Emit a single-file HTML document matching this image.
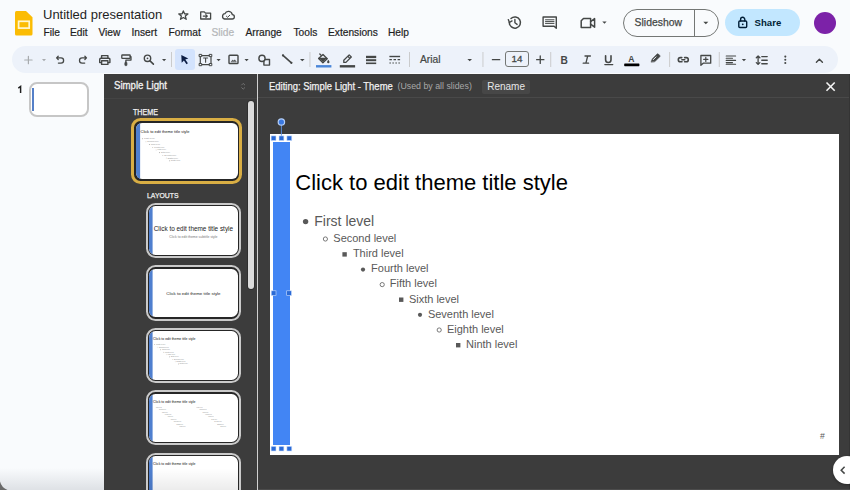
<!DOCTYPE html>
<html><head><meta charset="utf-8">
<style>
*{margin:0;padding:0;box-sizing:border-box}
html,body{width:850px;height:490px;overflow:hidden;background:#f9fbfd;font-family:"Liberation Sans",sans-serif;position:relative}
.a{position:absolute}
.t{white-space:nowrap;line-height:1}
svg{position:absolute;overflow:visible}
</style></head><body>

<!-- ===== HEADER ===== -->
<svg style="left:15px;top:11px" width="18" height="25" viewBox="0 0 18 25">
  <path d="M1.5 0 H11 L17.5 6.3 V23 Q17.5 24.5 16 24.5 H1.5 Q0 24.5 0 23 V1.5 Q0 0 1.5 0Z" fill="#fbbc04"/>
  <rect x="3.6" y="10.3" width="10.6" height="6.8" fill="none" stroke="#fff6d0" stroke-width="1.7"/>
</svg>
<div class="a t" style="left:43px;top:8.4px;font-size:13px;color:#1f1f1f">Untitled presentation</div>

<div class="a t" style="left:43.5px;top:28px;font-size:10.2px;color:#1f1f1f;-webkit-text-stroke:0.2px #1f1f1f">File</div>
<div class="a t" style="left:70px;top:28px;font-size:10.2px;color:#1f1f1f;-webkit-text-stroke:0.2px #1f1f1f">Edit</div>
<div class="a t" style="left:98.5px;top:28px;font-size:10.2px;color:#1f1f1f;-webkit-text-stroke:0.2px #1f1f1f">View</div>
<div class="a t" style="left:131.5px;top:28px;font-size:10.2px;color:#1f1f1f;-webkit-text-stroke:0.2px #1f1f1f">Insert</div>
<div class="a t" style="left:168.5px;top:28px;font-size:10.2px;color:#1f1f1f;-webkit-text-stroke:0.2px #1f1f1f">Format</div>
<div class="a t" style="left:211.5px;top:28px;font-size:10.2px;color:#b4b6b8;-webkit-text-stroke:0.2px #b4b6b8">Slide</div>
<div class="a t" style="left:245.5px;top:28px;font-size:10.2px;color:#1f1f1f;-webkit-text-stroke:0.2px #1f1f1f">Arrange</div>
<div class="a t" style="left:293.5px;top:28px;font-size:10.2px;color:#1f1f1f;-webkit-text-stroke:0.2px #1f1f1f">Tools</div>
<div class="a t" style="left:328px;top:28px;font-size:10.2px;color:#1f1f1f;-webkit-text-stroke:0.2px #1f1f1f">Extensions</div>
<div class="a t" style="left:388px;top:28px;font-size:10.2px;color:#1f1f1f;-webkit-text-stroke:0.2px #1f1f1f">Help</div>

<!-- Slideshow -->
<div class="a" style="left:623px;top:9px;width:96px;height:27.5px;border:1px solid #747775;border-radius:14px"></div>
<div class="a" style="left:694px;top:9px;width:1px;height:27.5px;background:#747775"></div>
<div class="a t" style="left:634.6px;top:17.6px;font-size:10.4px;color:#444746;-webkit-text-stroke:0.25px #444746">Slideshow</div>
<!-- Share -->
<div class="a" style="left:724.5px;top:9.2px;width:75px;height:27.2px;background:#c2e7ff;border-radius:14px"></div>
<div class="a t" style="left:754.6px;top:18px;font-size:9.6px;color:#001d35;font-weight:bold">Share</div>
<div class="a" style="left:813.6px;top:11.8px;width:22px;height:22px;border-radius:50%;background:#7c22a8"></div>

<!-- ===== TOOLBAR ===== -->
<div class="a" style="left:12.4px;top:46px;width:825.5px;height:26.5px;background:#edf2fa;border-radius:14px"></div>
<div class="a" style="left:174.5px;top:49px;width:20px;height:20.5px;background:#d3e3fd;border-radius:3px"></div>
<div class="a t" style="left:420px;top:54.6px;font-size:10.3px;color:#444746;-webkit-text-stroke:0.2px #444746">Arial</div>
<div class="a" style="left:505.2px;top:51.1px;width:23.5px;height:16.4px;border:1px solid #747775;border-radius:3px"></div>
<div class="a t" style="left:511.6px;top:54.2px;font-size:9.8px;color:#444746;-webkit-text-stroke:0.3px #444746">14</div>

<!-- ===== FILMSTRIP ===== -->
<svg style="left:0;top:0" width="30" height="100" viewBox="0 0 30 100"><path d="M20.6 93.1 V86.5 L18.3 88.2" fill="none" stroke="#1f1f1f" stroke-width="1.45" stroke-linejoin="miter"/></svg>
<div class="a" style="left:29.2px;top:81.7px;width:59.4px;height:35.6px;border:2px solid #c6c6c6;border-radius:8px;background:#fff"></div>
<div class="a" style="left:32.4px;top:87.8px;width:2.1px;height:23.7px;background:#5580c8"></div>

<div class="a" style="left:0;top:468px;width:104px;height:22px;background:linear-gradient(to bottom,rgba(200,204,210,0) 0%,rgba(200,204,210,0.55) 100%)"></div>
<svg style="left:0;top:0" width="20" height="490" viewBox="0 0 20 490"><path d="M0 481.5 Q1.5 487.5 7.5 490 H0 Z" fill="#6a6a6a"/></svg>
<!-- ===== THEME PANEL ===== -->
<div class="a" style="left:104px;top:73.5px;width:746px;height:416.5px;background:#3c3c3c"></div>
<div class="a t" style="left:114.4px;top:80.2px;font-size:10.9px;color:#f2f2f2;-webkit-text-stroke:0.3px #f2f2f2;transform-origin:0 0;transform:scaleX(0.885)">Simple Light</div>
<div class="a" style="left:104px;top:97.5px;width:153px;height:1px;background:#444"></div>
<div class="a" style="left:257px;top:73.5px;width:1px;height:416.5px;background:#d0d0d0"></div>
<div class="a" style="left:248px;top:101px;width:6px;height:188px;background:#dcdcdc;border-radius:3px;box-shadow:0 0 0 1px #2f2f2f"></div>
<div class="a t" style="left:132.6px;top:107.6px;font-size:8.6px;color:#f2f2f2;-webkit-text-stroke:0.25px #f2f2f2;transform-origin:0 0;transform:scaleX(0.83)">THEME</div>
<div class="a t" style="left:147px;top:192.2px;font-size:7.8px;color:#f2f2f2;-webkit-text-stroke:0.25px #f2f2f2;transform-origin:0 0;transform:scaleX(0.88)">LAYOUTS</div>


<!-- thumbnails -->
<div class="a" style="left:131.20px;top:118.40px;width:111.00px;height:65.60px;border:3.5px solid #d9ae44;border-radius:9.5px;background:#262626"></div>
<div class="a" style="left:136.10px;top:122.90px;width:101.90px;height:56.60px;border-radius:6.0px;background:#fff;overflow:hidden"><div class="a" style="left:0;top:0;width:569px;height:321px;transform-origin:0 0;transform:scale(0.1791)"><div class="a" style="left:0;top:0;width:23px;height:321px;background:#4f7fcf"></div><div class="a t" style="left:25.3px;top:38.3px;font-size:22px;color:#111">Click to edit theme title style</div><div class="a t" style="left:44.3px;top:79.7px;font-size:14px;color:#8c8c8c">First level</div>
<div class="a t" style="left:63.3px;top:99.2px;font-size:11px;color:#8c8c8c">Second level</div>
<div class="a t" style="left:82.9px;top:114.3px;font-size:11px;color:#8c8c8c">Third level</div>
<div class="a t" style="left:101.1px;top:129.3px;font-size:11px;color:#8c8c8c">Fourth level</div>
<div class="a t" style="left:119.8px;top:144.4px;font-size:11px;color:#8c8c8c">Fifth level</div>
<div class="a t" style="left:138.9px;top:159.7px;font-size:11px;color:#8c8c8c">Sixth level</div>
<div class="a t" style="left:157.9px;top:174.9px;font-size:11px;color:#8c8c8c">Seventh level</div>
<div class="a t" style="left:176.9px;top:190.1px;font-size:11px;color:#8c8c8c">Eighth level</div>
<div class="a t" style="left:196.0px;top:205.3px;font-size:11px;color:#8c8c8c">Ninth level</div><svg style="left:0;top:0" width="569" height="321" viewBox="0 0 569 321">
  <g fill="#8c8c8c">
    <circle cx="35.6" cy="87.6" r="2.7"/>
    <circle cx="55.4" cy="105" r="2.1" fill="none" stroke="#8c8c8c" stroke-width="0.8"/>
    <rect x="72.4" y="118.2" width="4.4" height="4.4"/>
    <circle cx="93" cy="135.6" r="2.1"/>
    <circle cx="112.2" cy="150.6" r="2.1" fill="none" stroke="#8c8c8c" stroke-width="0.8"/>
    <rect x="129" y="163.5" width="4.4" height="4.4"/>
    <circle cx="150" cy="180.8" r="2.1"/>
    <circle cx="169.2" cy="196" r="2.1" fill="none" stroke="#8c8c8c" stroke-width="0.8"/>
    <rect x="186" y="209" width="4.4" height="4.4"/>
  </g>
</svg></div></div>
<div class="a" style="left:145.80px;top:202.70px;width:95.60px;height:55.40px;border:2.3px solid #cacaca;border-radius:9.5px;background:#262626"></div>
<div class="a" style="left:149.40px;top:206.30px;width:88.80px;height:48.70px;border-radius:6.5px;background:#fff;overflow:hidden"><div class="a" style="left:0;top:0;width:569px;height:321px;transform-origin:0 0;transform:scale(0.1561)"><div class="a" style="left:0;top:0;width:23px;height:321px;background:#4f7fcf"></div>
<div class="a t" style="left:0;width:569px;text-align:center;top:124px;font-size:41px;color:#222">Click to edit theme title style</div>
<div class="a t" style="left:0;width:569px;text-align:center;top:186px;font-size:22px;color:#777">Click to edit theme subtitle style</div>
</div></div>
<div class="a" style="left:145.80px;top:265.20px;width:95.60px;height:55.40px;border:2.3px solid #cacaca;border-radius:9.5px;background:#262626"></div>
<div class="a" style="left:149.40px;top:268.80px;width:88.80px;height:48.70px;border-radius:6.5px;background:#fff;overflow:hidden"><div class="a" style="left:0;top:0;width:569px;height:321px;transform-origin:0 0;transform:scale(0.1561)"><div class="a" style="left:0;top:0;width:23px;height:321px;background:#4f7fcf"></div>
<div class="a t" style="left:0;width:569px;text-align:center;top:144px;font-size:28px;color:#1a1a1a">Click to edit theme title style</div>
</div></div>
<div class="a" style="left:145.80px;top:327.60px;width:95.60px;height:55.40px;border:2.3px solid #cacaca;border-radius:9.5px;background:#262626"></div>
<div class="a" style="left:149.40px;top:331.20px;width:88.80px;height:48.70px;border-radius:6.5px;background:#fff;overflow:hidden"><div class="a" style="left:0;top:0;width:569px;height:321px;transform-origin:0 0;transform:scale(0.1561)"><div class="a" style="left:0;top:0;width:23px;height:321px;background:#4f7fcf"></div><div class="a t" style="left:25.3px;top:38.3px;font-size:22px;color:#111">Click to edit theme title style</div><div class="a t" style="left:44.3px;top:79.7px;font-size:14px;color:#8c8c8c">First level</div>
<div class="a t" style="left:63.3px;top:99.2px;font-size:11px;color:#8c8c8c">Second level</div>
<div class="a t" style="left:82.9px;top:114.3px;font-size:11px;color:#8c8c8c">Third level</div>
<div class="a t" style="left:101.1px;top:129.3px;font-size:11px;color:#8c8c8c">Fourth level</div>
<div class="a t" style="left:119.8px;top:144.4px;font-size:11px;color:#8c8c8c">Fifth level</div>
<div class="a t" style="left:138.9px;top:159.7px;font-size:11px;color:#8c8c8c">Sixth level</div>
<div class="a t" style="left:157.9px;top:174.9px;font-size:11px;color:#8c8c8c">Seventh level</div>
<div class="a t" style="left:176.9px;top:190.1px;font-size:11px;color:#8c8c8c">Eighth level</div>
<div class="a t" style="left:196.0px;top:205.3px;font-size:11px;color:#8c8c8c">Ninth level</div><svg style="left:0;top:0" width="569" height="321" viewBox="0 0 569 321">
  <g fill="#8c8c8c">
    <circle cx="35.6" cy="87.6" r="2.7"/>
    <circle cx="55.4" cy="105" r="2.1" fill="none" stroke="#8c8c8c" stroke-width="0.8"/>
    <rect x="72.4" y="118.2" width="4.4" height="4.4"/>
    <circle cx="93" cy="135.6" r="2.1"/>
    <circle cx="112.2" cy="150.6" r="2.1" fill="none" stroke="#8c8c8c" stroke-width="0.8"/>
    <rect x="129" y="163.5" width="4.4" height="4.4"/>
    <circle cx="150" cy="180.8" r="2.1"/>
    <circle cx="169.2" cy="196" r="2.1" fill="none" stroke="#8c8c8c" stroke-width="0.8"/>
    <rect x="186" y="209" width="4.4" height="4.4"/>
  </g>
</svg></div></div>
<div class="a" style="left:145.80px;top:390.00px;width:95.60px;height:55.40px;border:2.3px solid #cacaca;border-radius:9.5px;background:#262626"></div>
<div class="a" style="left:149.40px;top:393.60px;width:88.80px;height:48.70px;border-radius:6.5px;background:#fff;overflow:hidden"><div class="a" style="left:0;top:0;width:569px;height:321px;transform-origin:0 0;transform:scale(0.1561)"><div class="a" style="left:0;top:0;width:23px;height:321px;background:#4f7fcf"></div><div class="a t" style="left:25.3px;top:38.3px;font-size:22px;color:#111">Click to edit theme title style</div><div class="a t" style="left:44.3px;top:79.7px;font-size:9px;color:#888">First level</div>
<div class="a t" style="left:63.3px;top:99.2px;font-size:8px;color:#888">Second level</div>
<div class="a t" style="left:82.9px;top:114.3px;font-size:8px;color:#888">Third level</div>
<div class="a t" style="left:101.1px;top:129.3px;font-size:8px;color:#888">Fourth level</div>
<div class="a t" style="left:119.8px;top:144.4px;font-size:8px;color:#888">Fifth level</div>
<div class="a t" style="left:138.9px;top:159.7px;font-size:8px;color:#888">Sixth level</div>
<div class="a t" style="left:157.9px;top:174.9px;font-size:8px;color:#888">Seventh level</div>
<div class="a t" style="left:176.9px;top:190.1px;font-size:8px;color:#888">Eighth level</div>
<div class="a t" style="left:196.0px;top:205.3px;font-size:8px;color:#888">Ninth level</div><div class="a" style="left:260px;top:0;width:300px;height:321px"><div class="a t" style="left:44.3px;top:79.7px;font-size:9px;color:#888">First level</div>
<div class="a t" style="left:63.3px;top:99.2px;font-size:8px;color:#888">Second level</div>
<div class="a t" style="left:82.9px;top:114.3px;font-size:8px;color:#888">Third level</div>
<div class="a t" style="left:101.1px;top:129.3px;font-size:8px;color:#888">Fourth level</div>
<div class="a t" style="left:119.8px;top:144.4px;font-size:8px;color:#888">Fifth level</div>
<div class="a t" style="left:138.9px;top:159.7px;font-size:8px;color:#888">Sixth level</div>
<div class="a t" style="left:157.9px;top:174.9px;font-size:8px;color:#888">Seventh level</div>
<div class="a t" style="left:176.9px;top:190.1px;font-size:8px;color:#888">Eighth level</div>
<div class="a t" style="left:196.0px;top:205.3px;font-size:8px;color:#888">Ninth level</div></div></div></div>
<div class="a" style="left:145.80px;top:452.60px;width:95.60px;height:55.40px;border:2.3px solid #cacaca;border-radius:9.5px;background:#262626"></div>
<div class="a" style="left:149.40px;top:456.20px;width:88.80px;height:48.70px;border-radius:6.5px;background:#fff;overflow:hidden"><div class="a" style="left:0;top:0;width:569px;height:321px;transform-origin:0 0;transform:scale(0.1561)"><div class="a" style="left:0;top:0;width:23px;height:321px;background:#4f7fcf"></div><div class="a t" style="left:25.3px;top:38.3px;font-size:22px;color:#111">Click to edit theme title style</div></div><div class="a" style="left:0;top:0;width:100%;height:100%;background:linear-gradient(to bottom,rgba(0,0,0,0) 25%,rgba(0,0,0,0.13) 100%)"></div></div>

<!-- ===== EDITOR ===== -->
<div class="a t" style="left:268.6px;top:81.1px;font-size:10.8px;color:#f2f2f2;-webkit-text-stroke:0.25px #f2f2f2;transform-origin:0 0;transform:scaleX(0.875)">Editing: Simple Light - Theme</div>
<div class="a t" style="left:397.5px;top:82px;font-size:8.8px;color:#a8a8a8">(Used by all slides)</div>
<div class="a" style="left:481.7px;top:79.8px;width:48.5px;height:13.8px;background:#474747;border-radius:2px"></div>
<div class="a t" style="left:487.2px;top:82px;font-size:10px;color:#e8e8e8">Rename</div>
<div class="a" style="left:258px;top:97.2px;width:592px;height:1px;background:#494949"></div>
<div class="a" style="left:848.5px;top:73.5px;width:1.5px;height:416.5px;background:#343434"></div>
<div class="a" style="left:258px;top:489px;width:592px;height:1px;background:#4c4c4c"></div>

<!-- slide -->
<div class="a" style="left:270px;top:134px;width:569px;height:321px;background:#fff"></div>
<div class="a" style="left:273px;top:141.6px;width:17px;height:303.1px;background:#4285f4"></div>

<div class="a t" style="left:295.3px;top:172.3px;font-size:22px;color:#000">Click to edit theme title style</div>



<!-- bullets -->
<div class="a t" style="left:314.3px;top:213.7px;font-size:14px;color:#595959">First level</div>
<div class="a t" style="left:333.3px;top:233.2px;font-size:11px;color:#595959">Second level</div>
<div class="a t" style="left:352.9px;top:248.3px;font-size:11px;color:#595959">Third level</div>
<div class="a t" style="left:371.1px;top:263.3px;font-size:11px;color:#595959">Fourth level</div>
<div class="a t" style="left:389.8px;top:278.4px;font-size:11px;color:#595959">Fifth level</div>
<div class="a t" style="left:408.9px;top:293.7px;font-size:11px;color:#595959">Sixth level</div>
<div class="a t" style="left:427.9px;top:308.9px;font-size:11px;color:#595959">Seventh level</div>
<div class="a t" style="left:446.9px;top:324.1px;font-size:11px;color:#595959">Eighth level</div>
<div class="a t" style="left:466px;top:339.3px;font-size:11px;color:#595959">Ninth level</div>
<div class="a t" style="left:820px;top:431.8px;font-size:8.6px;color:#595959">#</div>
<svg style="left:0;top:0" width="850" height="490" viewBox="0 0 850 490">
  <g fill="#595959">
    <circle cx="305.6" cy="221.6" r="2.7"/>
    <circle cx="325.4" cy="239" r="2.1" fill="none" stroke="#595959" stroke-width="0.8"/>
    <rect x="342.4" y="252.2" width="4.4" height="4.4"/>
    <circle cx="363" cy="269.6" r="2.1"/>
    <circle cx="382.2" cy="284.6" r="2.1" fill="none" stroke="#595959" stroke-width="0.8"/>
    <rect x="399" y="297.5" width="4.4" height="4.4"/>
    <circle cx="420" cy="314.8" r="2.1"/>
    <circle cx="439.2" cy="330" r="2.1" fill="none" stroke="#595959" stroke-width="0.8"/>
    <rect x="456" y="343" width="4.4" height="4.4"/>
  </g>
  <!-- rotation handle -->
  <line x1="281.4" y1="125" x2="281.4" y2="136" stroke="#5b93ea" stroke-width="0.9"/>
  <circle cx="281.4" cy="122" r="3.2" fill="#3a78e0" stroke="#b5cff7" stroke-width="1.2"/>
  <!-- handles -->
  <g fill="#2a6ad6" stroke="#cfe0fb" stroke-width="0.6">
    <rect x="271.1" y="135.9" width="4.9" height="4.7"/>
    <rect x="279" y="135.9" width="4.9" height="4.7"/>
    <rect x="286.9" y="135.9" width="4.9" height="4.7"/>
    <rect x="271.1" y="446.3" width="4.9" height="4.7"/>
    <rect x="279" y="446.3" width="4.9" height="4.7"/>
    <rect x="286.9" y="446.3" width="4.9" height="4.7"/>
    <rect x="271.2" y="290.8" width="4.8" height="4.7"/>
    <rect x="286.7" y="290.8" width="4.8" height="4.7"/>
  </g>
  <!-- close X -->
  <path d="M826.5 82.5 l8.2 8.2 M834.7 82.5 l-8.2 8.2" stroke="#f4f4f4" stroke-width="1.6"/>
  <!-- up/down arrows in panel header -->
  <path d="M241.4 85.2 l1.8 -1.8 l1.8 1.8 M241.4 87.4 l1.8 1.8 l1.8 -1.8" stroke="#777" stroke-width="0.9" fill="none"/>
</svg>
<!-- side collapse button -->
<div class="a" style="left:832.6px;top:455.7px;width:28.5px;height:28.5px;border-radius:50%;background:#fff;box-shadow:0 1px 3px rgba(0,0,0,0.35)"></div>
<svg style="left:0;top:0" width="850" height="490" viewBox="0 0 850 490">
  <path d="M844.6 466.8 l-3.4 3.4 l3.4 3.4" stroke="#444746" stroke-width="1.5" fill="none"/>
</svg>

<!-- ===== ICON OVERLAY ===== -->
<svg style="left:0;top:0" width="850" height="490" viewBox="0 0 850 490">
<g fill="none" stroke="#444746" stroke-width="1.3" stroke-linejoin="round" stroke-linecap="round">
  <!-- star -->
  <polygon points="183.35,10.90 184.57,13.80 187.90,14.00 185.35,16.10 186.20,19.30 183.35,17.55 180.50,19.30 181.35,16.10 178.80,14.00 182.13,13.80"/>
  <!-- folder -->
  <path d="M200.7 11.9 h3.6 l1.2 1.2 h5.1 v5.9 h-9.9 z"/>
  <path d="M203.2 16.1 h4.2 M205.8 14.6 l1.6 1.5 l-1.6 1.5" stroke-width="1.1"/>
  <!-- cloud -->
  <path d="M224.6 19 h7.4 a2.2 2.2 0 0 0 0.3 -4.4 a3.9 3.9 0 0 0 -7.4 -0.9 a2.7 2.7 0 0 0 -0.3 5.3 z"/>
  <path d="M226.4 16.2 l1.2 1.1 l2.2 -2.1" stroke-width="1"/>
  <!-- history -->
  <path d="M509.3 22.5 a5.6 5.6 0 1 0 1.7 -4" stroke-width="1.5"/>
  <path d="M508.3 19.6 l1.1 2.9 l2.6 -1.6" stroke-width="1.4"/>
  <path d="M514.9 19.5 v3.3 l2.2 1.6" stroke-width="1.4"/>
  <!-- comment -->
  <path d="M543.1 17 h13.2 v11.3 l-2.2 -2.1 h-11 z" stroke-width="1.4"/>
  <path d="M545.5 19.8 h8.5 M545.5 21.6 h8.5 M545.5 23.4 h8.5" stroke-width="1"/>
  <!-- meet -->
  <path d="M583.5 18.4 h7.1 v9.2 h-9.4 v-6.8 z" stroke-width="1.5"/>
  <path d="M590.6 21.6 l4 -3 v8.6 l-4 -3" stroke-width="1.5"/>
  <!-- lock -->
  <rect x="738.8" y="21" width="7.9" height="6.5" rx="1" stroke="#001d35" stroke-width="1.4"/>
  <path d="M740.6 21 v-1.6 a2.1 2.1 0 0 1 4.2 0 v1.6" stroke="#001d35" stroke-width="1.4"/>

  <!-- toolbar -->
  <path d="M28.4 56.3 v7.4 M24.7 60 h7.4" stroke="#a8abae" stroke-width="1.2"/>
  <path d="M58.2 56.3 l-1.6 1.6 l1.6 1.6 M56.8 57.9 h4.2 a2.6 2.6 0 0 1 0 5.2 h-2.6" stroke-width="1.3"/>
  <path d="M84.9 56.3 l1.6 1.6 l-1.6 1.6 M86.3 57.9 h-4.2 a2.6 2.6 0 0 0 0 5.2 h2.6" stroke-width="1.3"/>
  <!-- print -->
  <path d="M101.6 58.2 v-2.6 h6.3 v2.6" stroke-width="1.4"/>
  <path d="M101.4 62.6 h-1.7 v-3.2 a1.2 1.2 0 0 1 1.2 -1.2 h7.8 a1.2 1.2 0 0 1 1.2 1.2 v3.2 h-1.7" stroke-width="1.4"/>
  <rect x="101.6" y="60.8" width="6.3" height="3.6" stroke-width="1.4"/>
  <!-- paint format -->
  <rect x="121.8" y="55" width="8.4" height="3.3" rx="0.6" stroke-width="1.3"/>
  <path d="M130.2 56.7 h0.8 v3.4 h-5.1 v2" stroke-width="1.3"/>
  <rect x="124.9" y="62.3" width="2" height="3.3" rx="0.5" fill="#444746" stroke-width="0.8"/>
  <!-- zoom -->
  <circle cx="147.5" cy="58.3" r="3.2" stroke-width="1.4"/>
  <circle cx="147.5" cy="58.3" r="0.9" fill="#444746" stroke="none"/>
  <path d="M150 60.9 l3.4 3.2" stroke-width="1.6"/>
  <!-- text box -->
  <path d="M201 55.6 h9.2 M201 64.6 h9.2 M200.3 56.4 v7.4 M211 56.4 v7.4" stroke-width="1.2"/>
  <rect x="199.5" y="54.4" width="2.2" height="2.2" stroke-width="1" fill="#edf2fa"/>
  <rect x="209.6" y="54.4" width="2.2" height="2.2" stroke-width="1" fill="#edf2fa"/>
  <rect x="199.5" y="63.5" width="2.2" height="2.2" stroke-width="1" fill="#edf2fa"/>
  <rect x="209.6" y="63.5" width="2.2" height="2.2" stroke-width="1" fill="#edf2fa"/>
  <path d="M203.6 58 h4 M205.6 58 v4.3" stroke-width="1.1"/>
  <!-- image -->
  <rect x="229" y="55.2" width="9" height="8.3" rx="0.8" stroke-width="1.4"/>
  <path d="M231.3 61.6 l1.4 -1.6 l1.1 1 l0.9 -1.2 l1.4 1.8 z" fill="#444746" stroke-width="0.5"/>
  <!-- shapes -->
  <circle cx="262" cy="58.4" r="3.1" stroke-width="1.4"/>
  <path d="M265.6 59.5 h3.9 v5.6 h-5.6 v-3.9" stroke-width="1.4"/>
  <!-- line -->
  <path d="M283 55.4 l8.4 7.4" stroke-width="1.6"/>
  <!-- fill bucket -->
  <path d="M319.8 54 l1.6 1.6 M318.6 58.6 l4.4 -4.1 l4.2 4.2 l-4.3 4.2 z" stroke-width="1.3"/>
  <path d="M318.9 58.4 h8" stroke-width="1.2"/>
  <path d="M319.6 58.9 l3.4 3.3 l3.4 -3.4 z" fill="#444746" stroke="none"/>
  <path d="M328.3 59.8 q1.2 1.5 1.2 2.2 a1.2 1.2 0 0 1 -2.4 0 q0 -0.7 1.2 -2.2z" fill="#444746" stroke="none"/>
  <!-- pen -->
  <path d="M343.8 62.4 v-2.1 l5.4 -5.4 l2.1 2.1 l-5.4 5.4 z M347.8 56.3 l2.1 2.1" stroke-width="1.3"/>
  <!-- align -->
  <path d="M726.2 56 h9.4 M726.2 58.2 h6.3 M726.2 60.4 h9.4 M726.2 62.6 h6.3 M726.2 64.3 h9.4" stroke-width="1.1"/>
  <!-- line spacing -->
  <path d="M758.1 56 v8.4 M756.3 57.8 l1.8 -1.8 l1.8 1.8 M756.3 62.6 l1.8 1.8 l1.8 -1.8" stroke-width="1.3"/>
  <path d="M761.8 56.6 h5.4 M761.8 60.2 h5.4 M761.8 63.8 h5.4" stroke-width="1.4"/>
  <!-- link -->
  <path d="M681.8 57.6 h-1.4 a2.1 2.1 0 0 0 0 4.2 h1.6 M684.6 57.6 h1.6 a2.1 2.1 0 0 1 0 4.2 h-1.6 M681.9 59.7 h2.8" stroke-width="1.6"/>
  <!-- add comment -->
  <path d="M700.9 55.5 h9.8 v7.7 h-7.5 l-2.3 2 z" stroke-width="1.3"/>
  <path d="M705.8 57.3 v4.2 M703.7 59.4 h4.2" stroke-width="1.2"/>
  <!-- highlighter -->
  <path d="M651.2 61.8 l1 -2.9 l4.9 -4.9 q0.6 -0.6 1.2 0 l1.5 1.5 q0.6 0.6 0 1.2 l-4.9 4.9 z" fill="#444746" stroke-width="0.6"/><path d="M653.3 59.6 l2.7 -2.7" stroke="#edf2fa" stroke-width="1"/>
  <!-- chevron up -->
  <path d="M816.4 62.3 l3 -3.1 l3 3.1" stroke-width="1.4"/>
  <!-- minus plus -->
  <path d="M492.4 59.7 h7.3" stroke-width="1.3"/>
  <path d="M536.6 59.7 h7.3 M540.25 56 v7.4" stroke-width="1.3"/>
  <!-- underline -->
  <path d="M605.6 55.8 v4 a2.7 2.7 0 0 0 5.4 0 v-4" stroke-width="1.6"/>
  <path d="M604.8 64.6 h8" stroke-width="1.2"/>
  <!-- italic -->
  <path d="M585 56 h5.4 M583.2 63.2 h5.4 M587.7 56 l-1.8 7.2" stroke-width="1.3"/>
</g>
<g fill="#444746" stroke="none">
  <!-- dropdown triangles -->
  <path d="M42 59 h4 l-2 2.2z" fill="#a8abae"/>
  <path d="M162 59 h4.2 l-2.1 2.2z"/>
  <path d="M216.5 59 h4.2 l-2.1 2.2z"/>
  <path d="M244.5 59 h4.2 l-2.1 2.2z"/>
  <path d="M300 59 h4.6 l-2.3 2.3z"/>
  <path d="M467.4 59 h4.6 l-2.3 2.3z"/>
  <path d="M741.8 59 h4.3 l-2.15 2.2z"/>
  <path d="M602.3 21.6 h4.3 l-2.15 2.2z"/>
  <path d="M703.3 21.8 h5 l-2.5 2.5z"/>
  <!-- line dots -->
  <circle cx="283" cy="55.4" r="1.1"/>
  <circle cx="291.4" cy="62.8" r="1.1"/>
  <!-- separators -->
  <rect x="171" y="52" width="0.9" height="15" fill="#c7c7c7"/>
  <rect x="309.5" y="52" width="0.9" height="15" fill="#c7c7c7"/>
  <rect x="409" y="52" width="0.9" height="15" fill="#c7c7c7"/>
  <rect x="482.5" y="52" width="0.9" height="15" fill="#c7c7c7"/>
  <rect x="550.3" y="52" width="0.9" height="15" fill="#c7c7c7"/>
  <rect x="669.2" y="52" width="0.9" height="15" fill="#c7c7c7"/>
  <rect x="718.8" y="52" width="0.9" height="15" fill="#c7c7c7"/>
  <!-- cursor -->
  <path d="M181.3 54.9 l7 3.6 l-3 0.9 l2.6 3.9 l-1.4 1 l-2.6 -3.9 l-2.2 2.3 z" fill="#0b1d45"/>
  <!-- color bars -->
  <rect x="316" y="65.1" width="15.4" height="2.4" fill="#4a86d8"/>
  <rect x="339.8" y="65.1" width="15.3" height="2.4" fill="#444746"/>
  <rect x="624.2" y="63.4" width="15.2" height="2.8" rx="0.6" fill="#000"/>
  <!-- line weight -->
  <rect x="366" y="55.8" width="10.2" height="2.3"/>
  <rect x="366" y="59.2" width="10.2" height="2"/>
  <rect x="366" y="62.5" width="10.2" height="1.6"/>
  <!-- line dash -->
  <rect x="389.4" y="55.8" width="10.7" height="1.4"/>
  <path d="M389.4 59 h2.5 v1.3 h-2.5z M393.5 59 h2.5 v1.3 h-2.5z M397.6 59 h2.5 v1.3 h-2.5z"/>
  <path d="M389.4 62.4 h1.5 v1.2 h-1.5z M392.4 62.4 h1.5 v1.2 h-1.5z M395.4 62.4 h1.5 v1.2 h-1.5z M398.4 62.4 h1.5 v1.2 h-1.5z"/>
  <!-- more vert -->
  <circle cx="785.3" cy="56.6" r="1.05"/>
  <circle cx="785.3" cy="59.8" r="1.05"/>
  <circle cx="785.3" cy="63" r="1.05"/>
  <!-- lock dot -->
  <circle cx="742.75" cy="24.3" r="0.9" fill="#001d35"/>
</g>
<!-- B and A -->
<text x="560.6" y="63.5" font-family="Liberation Sans" font-weight="bold" font-size="10.2" fill="#444746">B</text>
<text x="628.3" y="61.6" font-family="Liberation Sans" font-weight="bold" font-size="8.6" fill="#444746">A</text>
</svg>

</body></html>
